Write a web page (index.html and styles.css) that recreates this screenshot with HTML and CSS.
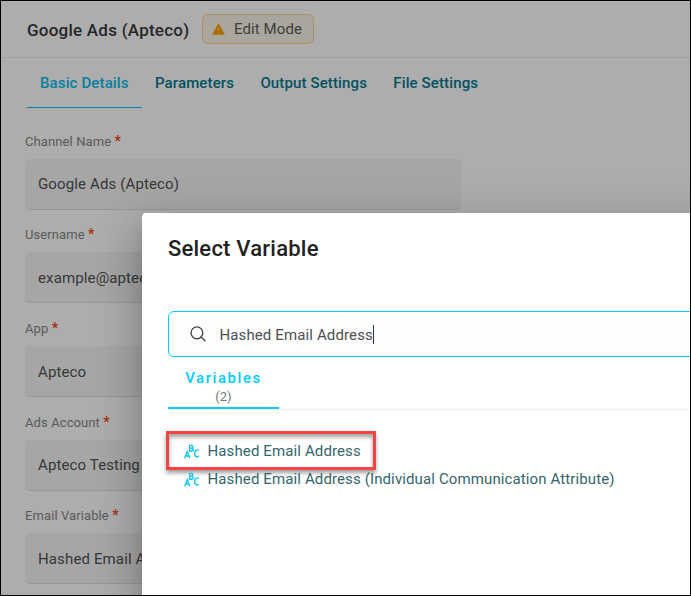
FILE: index.html
```html
<!DOCTYPE html>
<html lang="en">
<head>
<meta charset="utf-8">
<title>Google Ads (Apteco)</title>
<link rel="stylesheet" href="styles.css">
</head>
<body>
<div class="window">
  <main class="page">
    <header class="header">
      <h1 class="page-title">Google Ads (Apteco)</h1>
      <span class="badge">
        <svg class="badge-icon" viewBox="0 0 13 12" width="13" height="12"><path fill="#ffa000" d="M6.500 0 12.900 11.800H.1Z"/><path stroke="#fff0cc" stroke-width=".8" d="M6.500 4.800v3.400M6.500 9.200v1"/></svg>
        <span class="badge-text">Edit Mode</span>
      </span>
    </header>
    <nav class="tabs">
      <a class="tab active">Basic Details</a>
      <a class="tab">Parameters</a>
      <a class="tab">Output Settings</a>
      <a class="tab">File Settings</a>
    </nav>
    <form class="form">
      <div class="field"><label class="label">Channel Name <b>*</b></label><div class="input">Google Ads (Apteco)</div></div>
      <div class="field"><label class="label">Username <b>*</b></label><div class="input">example@apteco.com</div></div>
      <div class="field"><label class="label">App <b>*</b></label><div class="input">Apteco</div></div>
      <div class="field"><label class="label">Ads Account <b>*</b></label><div class="input">Apteco Testing</div></div>
      <div class="field"><label class="label">Email Variable <b>*</b></label><div class="input">Hashed Email Address</div></div>
    </form>
  </main>
  <div class="backdrop"></div>
  <section class="dialog">
    <h2 class="dialog-title">Select Variable</h2>
    <div class="search">
      <svg class="search-icon" viewBox="0 0 16 16" width="16" height="16" fill="none" stroke="#484848" stroke-width="1.4" stroke-linecap="round"><circle cx="6.9" cy="6.8" r="5.9"/><path d="M11.2 11.1 15 14.7"/></svg>
      <span class="query">Hashed Email Address</span><span class="caret"></span>
    </div>
    <div class="result-tabs">
      <div class="result-tab"><span class="result-name">Variables</span><span class="result-count">(2)</span></div>
    </div>
    <ul class="results">
      <li class="result highlighted">
        <svg class="abc" viewBox="0 0 16 15" width="16" height="15" fill="none" stroke="#14c5f5" stroke-width="1.4"><path d="M.7 14.200 3.300 7.500 5.900 14.200M1.500 12h3.600M5.700.8v7M5.700 1.400h1.500c2.100 0 2.100 2.700 0 2.700H5.700M7.200 4.100c2.700 0 2.700 3.100 0 3.100H5.700M15 6.400c-2.500-1.300-4.400.2-4.400 3s1.900 4.300 4.400 3"/></svg>
        <span>Hashed Email Address</span>
      </li>
      <li class="result">
        <svg class="abc" viewBox="0 0 16 15" width="16" height="15" fill="none" stroke="#14c5f5" stroke-width="1.4"><path d="M.7 14.200 3.300 7.500 5.900 14.200M1.500 12h3.600M5.700.8v7M5.700 1.400h1.500c2.100 0 2.100 2.700 0 2.700H5.700M7.200 4.100c2.700 0 2.700 3.100 0 3.100H5.700M15 6.400c-2.500-1.300-4.400.2-4.400 3s1.900 4.300 4.400 3"/></svg>
        <span>Hashed Email Address (Individual Communication Attribute)</span>
      </li>
    </ul>
  </section>
</div>
</body>
</html>
```
FILE: styles.css
```css
*, *::after { box-sizing: border-box; }
body { margin: 0; font-family: Roboto, "Liberation Sans", sans-serif; }
h1, h2, ul { margin: 0; padding: 0; }
.window { position: relative; width: 691px; height: 596px; border: 1px solid #000; overflow: hidden; background: #fff; }
.header { height: 57px; padding-left: 26px; border-bottom: 1px solid #ebebeb; display: flex; align-items: center; gap: 13px; }
.page-title { width: 162px; font-size: 17px; font-weight: 500; color: #383838; letter-spacing: .24px; line-height: 24px; white-space: nowrap; padding-top: 2px; }
.badge { height: 30px; width: 112px; border: 1px solid #ffd18a; border-radius: 6px; background: #fdf5e8; display: flex; align-items: center; padding-left: 9px; gap: 9px; }
.badge-text { font-size: 15px; letter-spacing: .1px; color: #5c5c5c; white-space: nowrap; }
.tabs { display: flex; padding-left: 26px; height: 50px; }
.tab { padding: 0 13.3px 0 13px; line-height: 51px; font-size: 15px; font-weight: 500; letter-spacing: .13px; color: #04798f; white-space: nowrap; }
.tab.active { color: #06bdec; border-bottom: 1px solid #06bdec; }
.form { padding: 25.6px 0 0 24px; }
.field { height: 93.7px; width: 436px; }
.label { display: block; height: 25px; line-height: 16px; font-size: 13px; letter-spacing: .1px; color: #868686; }
.label b { font-size: 14px; line-height: 10px; color: #f04a14; font-weight: 700; }
.input { height: 51px; line-height: 50px; padding: .7px 0 0 13px; font-size: 15px; letter-spacing: .13px; color: #525252; background: #f5f5f5; border-bottom: 1px solid #d5e3e5; border-radius: 5px; white-space: nowrap; }
.backdrop { position: absolute; inset: 0; background: rgba(0,0,0,.32); }
.dialog { position: absolute; left: 141px; top: 212px; right: -60px; bottom: -20px; padding: 22px 0 0 26px; background: #fff; border-radius: 4px; box-shadow: 0 11px 15px -7px rgba(0,0,0,.2), 0 24px 38px 3px rgba(0,0,0,.14), 0 9px 46px 8px rgba(0,0,0,.12); }
.dialog-title { font-size: 22px; line-height: 28px; font-weight: 500; letter-spacing: .22px; color: #222; }
.search { margin-top: 48px; height: 46px; border: 1px solid #0cf; border-radius: 6px; background: #fdfdfd; display: flex; align-items: center; padding-left: 21px; }
.search-icon { margin-right: 13.4px; }
.query { padding-top: 2px; font-size: 15px; letter-spacing: .13px; color: #505050; white-space: nowrap; }
.caret { width: 1px; height: 19px; background: #333; }
.result-tabs { display: flex; height: 53px; border-bottom: 1px solid #eee; }
.result-tab { width: 111px; height: 52px; border-bottom: 2px solid #0cf; display: flex; flex-direction: column; align-items: center; padding-top: 11px; }
.result-name { font-size: 15px; line-height: 20px; font-weight: 500; letter-spacing: 1.55px; color: #0cf; }
.result-count { font-size: 13px; line-height: 18px; color: #777; }
.results { list-style: none; padding-top: 27px; }
.result { position: relative; height: 28px; padding-left: 16px; display: flex; align-items: center; gap: 7.5px; font-size: 15px; letter-spacing: .12px; color: #33666c; white-space: nowrap; }
.highlighted::after { content: ""; position: absolute; left: -2px; top: -6px; width: 210px; height: 39px; border: 3px solid #fb4141; box-shadow: 0 3px 4px rgba(0,0,0,.38), inset 0 3px 4px rgba(0,0,0,.38); }
```
